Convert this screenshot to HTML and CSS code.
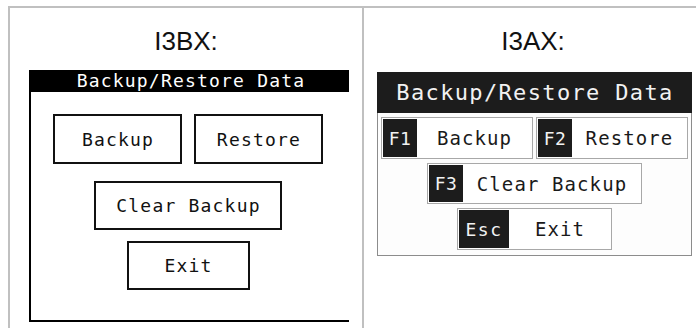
FILE: index.html
```html
<!DOCTYPE html>
<html>
<head>
<meta charset="utf-8">
<link rel="stylesheet" href="styles.css">
</head>
<body>
<div class="table">
  <div class="cell left">
    <div class="title">I3BX:</div>
    <div class="bx">
      <div class="bx-header">Backup/Restore Data</div>
      <div class="bx-body">
        <div class="bx-row r1">
          <div class="bx-btn half">Backup</div>
          <div class="bx-btn half">Restore</div>
        </div>
        <div class="bx-row r2">
          <div class="bx-btn clear">Clear Backup</div>
        </div>
        <div class="bx-row r3">
          <div class="bx-btn exit">Exit</div>
        </div>
      </div>
    </div>
  </div>
  <div class="cell right">
    <div class="title">I3AX:</div>
    <div class="ax">
      <div class="ax-header">Backup/Restore Data</div>
      <div class="ax-body">
        <div class="ax-row">
          <div class="ax-btn half"><span class="key">F1</span><span class="lbl">Backup</span></div>
          <div class="ax-btn half"><span class="key">F2</span><span class="lbl">Restore</span></div>
        </div>
        <div class="ax-row">
          <div class="ax-btn clear"><span class="key">F3</span><span class="lbl">Clear Backup</span></div>
        </div>
        <div class="ax-row">
          <div class="ax-btn exit"><span class="key esc">Esc</span><span class="lbl">Exit</span></div>
        </div>
      </div>
    </div>
  </div>
</div>
</body>
</html>
```
FILE: styles.css
```css
html, body {
  margin: 0;
  padding: 0;
  background: #fff;
  overflow: hidden;
}

.table {
  box-sizing: border-box;
  display: flex;
  margin: 6px 0 0 8px;
  border-top: 2px solid #c0c0c0;
  border-left: 2px solid #c0c0c0;
  height: 322px;
  width: 688px;
}

.cell {
  display: flex;
  flex-direction: column;
  align-items: flex-start;
}

.cell.left {
  width: 352px;
  border-right: 2px solid #c0c0c0;
}

.cell.right { flex: 1; }

.title {
  align-self: stretch;
  padding-top: 18px;
  font-family: "Liberation Sans", Arial, sans-serif;
  font-size: 26px;
  line-height: 30px;
  text-align: center;
  color: #111;
}

.cell.right .title { padding-left: 6px; }

/* ---------- I3BX ---------- */
.bx {
  margin: 14px 0 0 19px;
  width: 320px;
}

.bx-header {
  height: 22px;
  background: #000;
  color: #fff;
  font-family: "DejaVu Sans Mono", monospace;
  font-size: 18px;
  letter-spacing: 1.2px;
  padding-left: 4px;
  line-height: 22px;
  text-align: center;
}

.bx-body {
  box-sizing: border-box;
  height: 230px;
  border-left: 2px solid #000;
  border-bottom: 2px solid #000;
  padding: 22px 4px 0 0;
  display: flex;
  flex-direction: column;
}

.bx-row {
  display: flex;
  justify-content: center;
  gap: 12px;
}

.bx-row.r2 { margin-top: 17px; }
.bx-row.r3 { margin-top: 11px; }

.bx-btn {
  box-sizing: border-box;
  border: 2px solid #111;
  display: flex;
  align-items: center;
  justify-content: center;
  font-family: "DejaVu Sans Mono", monospace;
  font-size: 18px;
  letter-spacing: 1.2px;
  padding-left: 1px;
  color: #111;
  height: 50px;
}

.bx-btn.half { width: 129px; }
.bx-btn.clear { width: 188px; height: 49px; }
.bx-btn.exit { width: 123px; height: 49px; }

/* ---------- I3AX ---------- */
.ax {
  margin: 16px 0 0 13px;
  width: 315px;
}

.ax-header {
  height: 41px;
  background: #1c1c1c;
  color: #f2f2f2;
  font-family: "DejaVu Sans Mono", monospace;
  font-size: 22px;
  letter-spacing: 1.35px;
  padding-left: 1px;
  line-height: 41px;
  text-align: center;
}

.ax-body {
  box-sizing: border-box;
  height: 143px;
  border: 1px solid #8c8c8c;
  border-top: none;
  background: #fdfdfd;
  padding: 4px 3px 0;
  display: flex;
  flex-direction: column;
  gap: 4px;
}

.ax-row {
  display: flex;
  justify-content: center;
  gap: 3px;
}

.ax-btn {
  box-sizing: border-box;
  height: 42px;
  border: 1px solid #a8a8a8;
  padding: 1px;
  display: flex;
  background: #fff;
}

.ax-btn.half { flex: 1; }
.ax-btn.clear { width: 215px; height: 41px; }
.ax-btn.exit { width: 155px; }

.key {
  width: 34px;
  background: #1c1c1c;
  color: #f2f2f2;
  font-family: "DejaVu Sans Mono", monospace;
  font-size: 18px;
  letter-spacing: 0.5px;
  display: flex;
  align-items: center;
  justify-content: center;
}

.key.esc { width: 50px; letter-spacing: 1.5px; }

.lbl {
  flex: 1;
  display: flex;
  align-items: center;
  justify-content: center;
  font-family: "DejaVu Sans Mono", monospace;
  font-size: 19px;
  letter-spacing: 1.1px;
  padding-left: 1px;
  color: #1a1a1a;
}
```
